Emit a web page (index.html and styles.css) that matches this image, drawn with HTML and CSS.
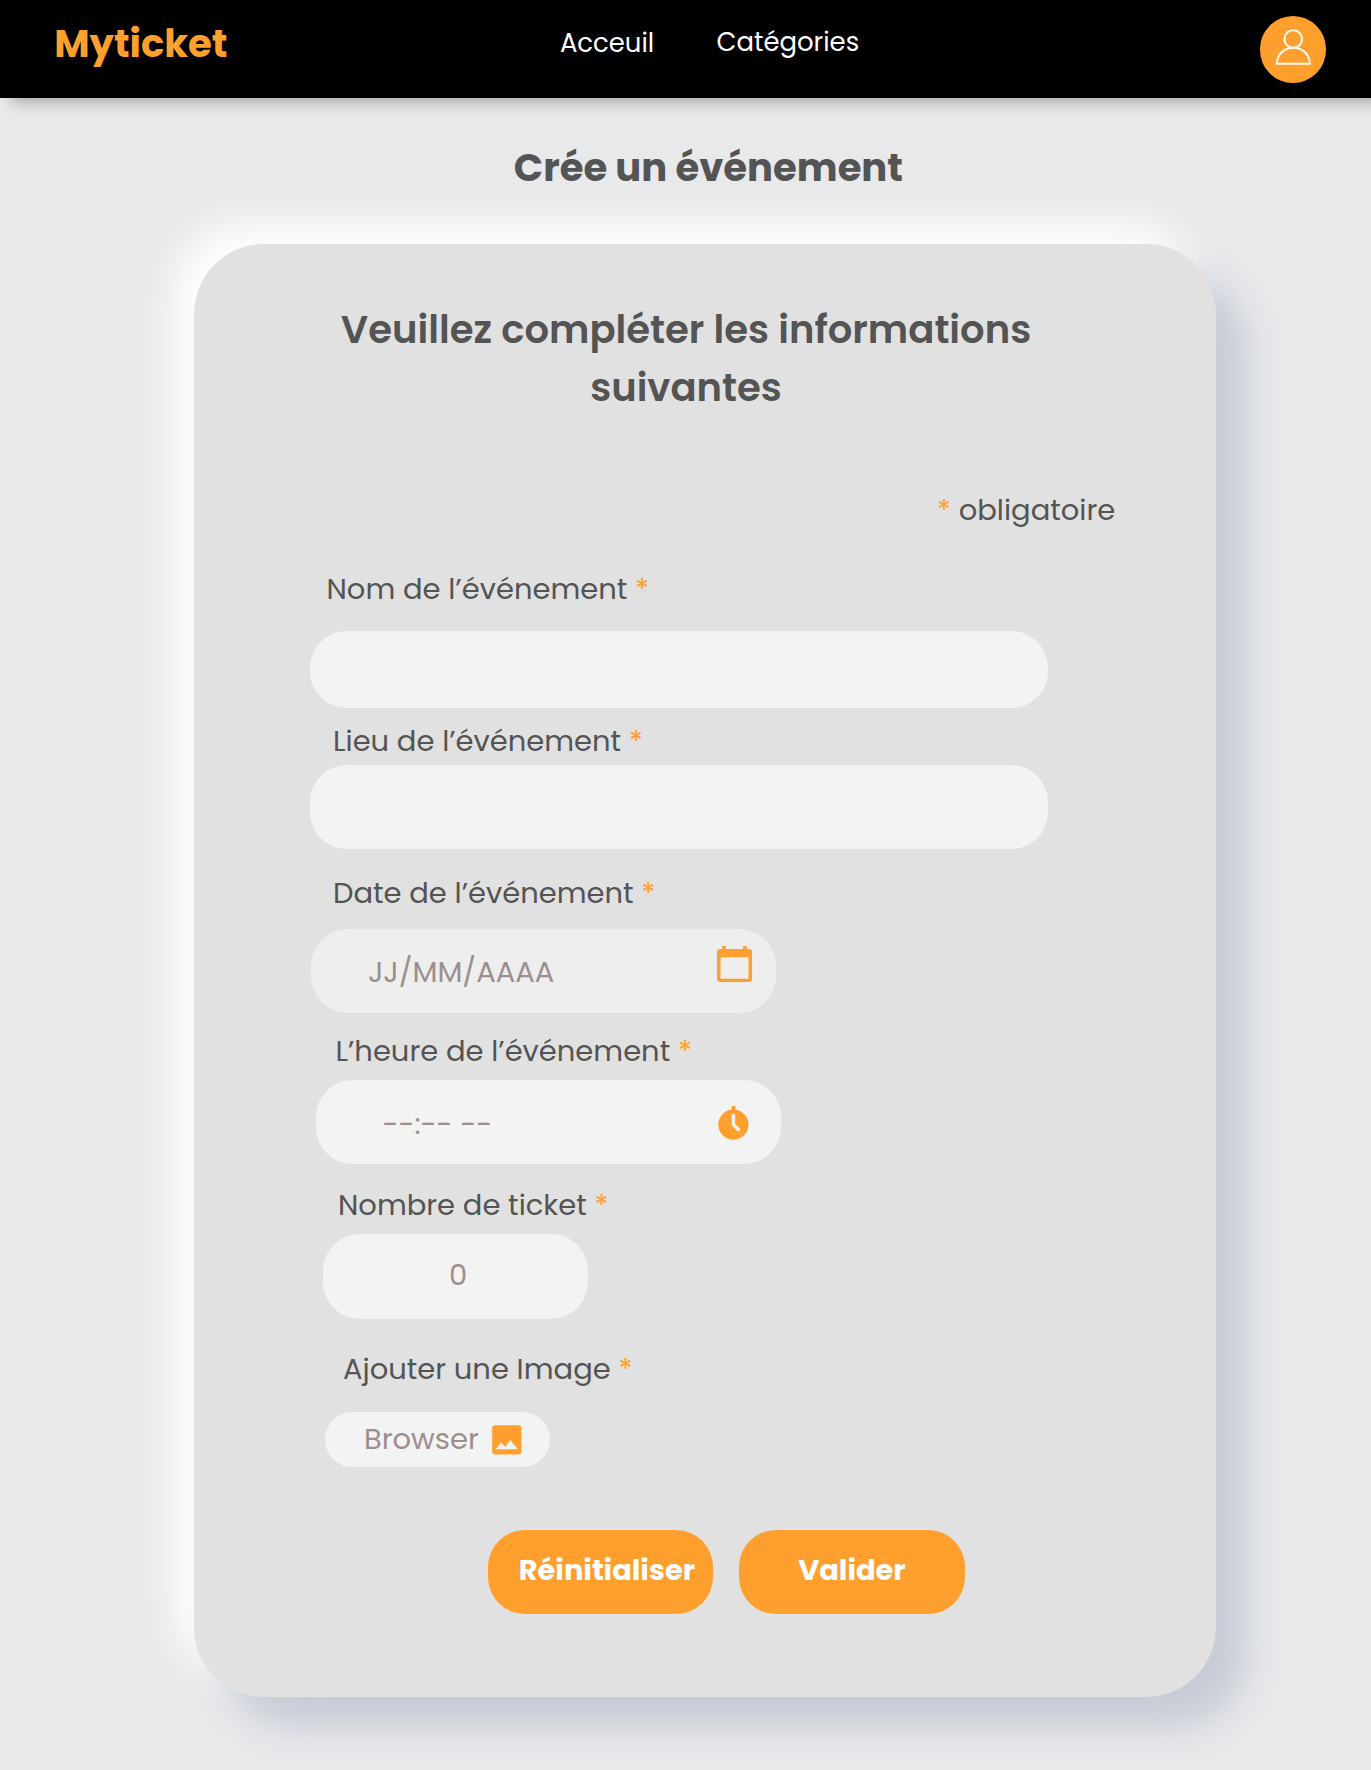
FILE: index.html
```html
<!DOCTYPE html>
<html lang="fr">
<head>
<meta charset="utf-8">
<title>Myticket – Crée un événement</title>
<link rel="stylesheet" href="styles.css">
</head>
<body>
<header class="header">
  <div class="logo">Myticket</div>
  <nav class="nav">
    <a class="nav-link">Acceuil</a>
    <a class="nav-link nav-link-categories">Catégories</a>
  </nav>
  <div class="avatar">
    <svg width="67" height="67" viewBox="0 0 67 67" fill="none" stroke="#fff8ee" stroke-width="2">
      <circle cx="33.2" cy="23" r="8.8"/>
      <path d="M16.9 47.8C16.9 38.6 24 31.7 33.3 31.7S49.8 38.6 49.8 47.8Z"/>
    </svg>
  </div>
</header>

<h1 class="title">Crée un événement</h1>

<main class="card">
  <h2 class="card-title">Veuillez compléter les informations suivantes</h2>
  <p class="required-note"><span class="star">*</span> obligatoire</p>

  <label class="label label-name">Nom de l’événement <span class="star">*</span></label>
  <input class="field field-name" type="text">

  <label class="label label-place">Lieu de l’événement <span class="star">*</span></label>
  <input class="field field-place" type="text">

  <label class="label label-date">Date de l’événement <span class="star">*</span></label>
  <div class="field field-date">
    <span class="placeholder">JJ/MM/AAAA</span>
    <svg class="icon-calendar" width="35" height="36" viewBox="0 0 35 36" fill="#ff9f2d">
      <path fill-rule="evenodd" d="M5.3 0H9V3H26V0H29.7V3H32A3 3 0 0 1 35 6V33A3 3 0 0 1 32 36H3A3 3 0 0 1 0 33V6A3 3 0 0 1 3 3H5.3ZM3.5 11.3V32.8H31.5V11.3Z"/>
    </svg>
  </div>

  <label class="label label-time">L’heure de l’événement <span class="star">*</span></label>
  <div class="field field-time">
    <span class="placeholder">--:-- --</span>
    <svg class="icon-clock" width="31" height="34" viewBox="0 0 31 34">
      <path d="M13.5 0H17.3V5H13.5Z" fill="#ff9f2d"/>
      <circle cx="15.4" cy="18.6" r="15.1" fill="#ff9f2d"/>
      <path d="M15.4 8.3V18.6L21.3 24.4" fill="none" stroke="#f3f3f3" stroke-width="3.5"/>
    </svg>
  </div>

  <label class="label label-count">Nombre de ticket <span class="star">*</span></label>
  <div class="field field-count"><span class="placeholder">0</span></div>

  <label class="label label-image">Ajouter une Image <span class="star">*</span></label>
  <div class="field field-image">
    <span class="placeholder">Browser</span>
    <svg class="icon-image" width="30" height="30" viewBox="0 0 30 30">
      <rect x=".2" y=".2" width="29.2" height="29.4" rx="3" fill="#ff9f2d"/>
      <path d="M3.7 24.3L9 17.6L13.2 21.7L18.4 15L25.8 24.3Z" fill="#f3f3f3"/>
    </svg>
  </div>

  <div class="actions">
    <button class="button button-reset" type="reset">Réinitialiser</button>
    <button class="button button-submit" type="submit">Valider</button>
  </div>
</main>
</body>
</html>
```
FILE: styles.css
```css
* {
  box-sizing: border-box;
}

body {
  margin: 0;
  height: 1770px;
  overflow: hidden;
  background: #e8e9eb;
  color: #545454;
  font-family: Poppins, Inter, sans-serif;
  font-size: 28.97px;
  line-height: 40px;
}

svg {
  display: block;
}

/* Header */

.header {
  display: flex;
  align-items: flex-start;
  height: 98px;
  padding: 0 45px 0 54.2px;
  background: #000;
  box-shadow: 12px 4px 14px rgba(0, 0, 0, 0.3);
}

.logo {
  margin-top: 13.5px;
  color: #ff9f2d;
  font-size: 38.55px;
  font-weight: 700;
  line-height: 60px;
}

.nav {
  display: flex;
  gap: 62.4px;
  margin: 23px 0 0 332.4px;
  color: #fff;
  font-size: 25.9px;
}

.nav-link-categories {
  margin-top: -1px;
}

.avatar {
  width: 66.5px;
  height: 66.5px;
  margin: 16.2px 0 0 auto;
  border-radius: 50%;
  background: #ff9f2d;
}

/* Page title */

.title {
  margin: 40.5px 0 47.5px 513.8px;
  font-size: 38.55px;
  font-weight: 700;
  line-height: 58px;
}

/* Card */

.card {
  display: flex;
  flex-direction: column;
  align-items: flex-start;
  width: 1021.7px;
  height: 1453px;
  margin-left: 194.3px;
  padding: 57px 0 0 115.7px;
  border-radius: 70px;
  background: #e1e1e1;
  box-shadow: 30px 30px 36px #c6cbd5, -20px -20px 40px #fff;
}

.card-title {
  width: 752px;
  margin: 0;
  font-size: 38.55px;
  font-weight: 600;
  line-height: 58px;
  text-align: center;
}

.required-note {
  margin: 73px 0 0 626.9px;
}

.star {
  color: #ff9f2d;
}

.label {
  white-space: nowrap;
}

.label-name { margin: 39px 0 22px 16.5px; }
.label-place { margin: 13px 0 3.5px 23px; }
.label-date { margin: 24.5px 0 15.5px 23px; }
.label-time { margin: 18.5px 0 9px 25.5px; }
.label-count { margin: 21px 0 9px 28px; }
.label-image { margin: 30.5px 0 23px 33px; }

/* Fields */

.field {
  display: flex;
  align-items: flex-start;
  height: 84px;
  border: 0;
  border-radius: 37px;
  background: #f3f3f3;
}

.placeholder {
  color: #9d8e8e;
}

.field-name,
.field-place {
  width: 738px;
}

.field-name {
  height: 77px;
}

.field-date {
  width: 465px;
  margin-left: 1px;
  padding: 23.5px 23.5px 0 57px;
  background: #eee;
}

.icon-calendar {
  margin: -6px 0 0 auto;
}

.field-time {
  width: 465px;
  margin-left: 6.5px;
  padding: 23.5px 32.5px 0 66px;
}

.icon-clock {
  margin: 2.5px 0 0 auto;
}

.field-count {
  width: 265.5px;
  height: 84.5px;
  margin-left: 13px;
  padding: 20.5px 0 0 126px;
}

.field-image {
  width: 224.5px;
  height: 55px;
  margin-left: 15.5px;
  padding: 7px 28px 0 38.5px;
  border-radius: 27.5px;
}

.icon-image {
  margin: 6px 0 0 auto;
}

/* Buttons */

.actions {
  display: flex;
  gap: 26px;
  margin: 63px 0 0 177.7px;
}

.button {
  width: 225.5px;
  height: 84px;
  padding: 0 0 5px;
  border: 0;
  border-radius: 37px;
  background: #ff9f2d;
  color: #fff;
  font: 700 28.9px/40px Poppins, Inter, sans-serif;
  text-align: center;
}

.button-reset {
  padding-left: 13px;
}
```
